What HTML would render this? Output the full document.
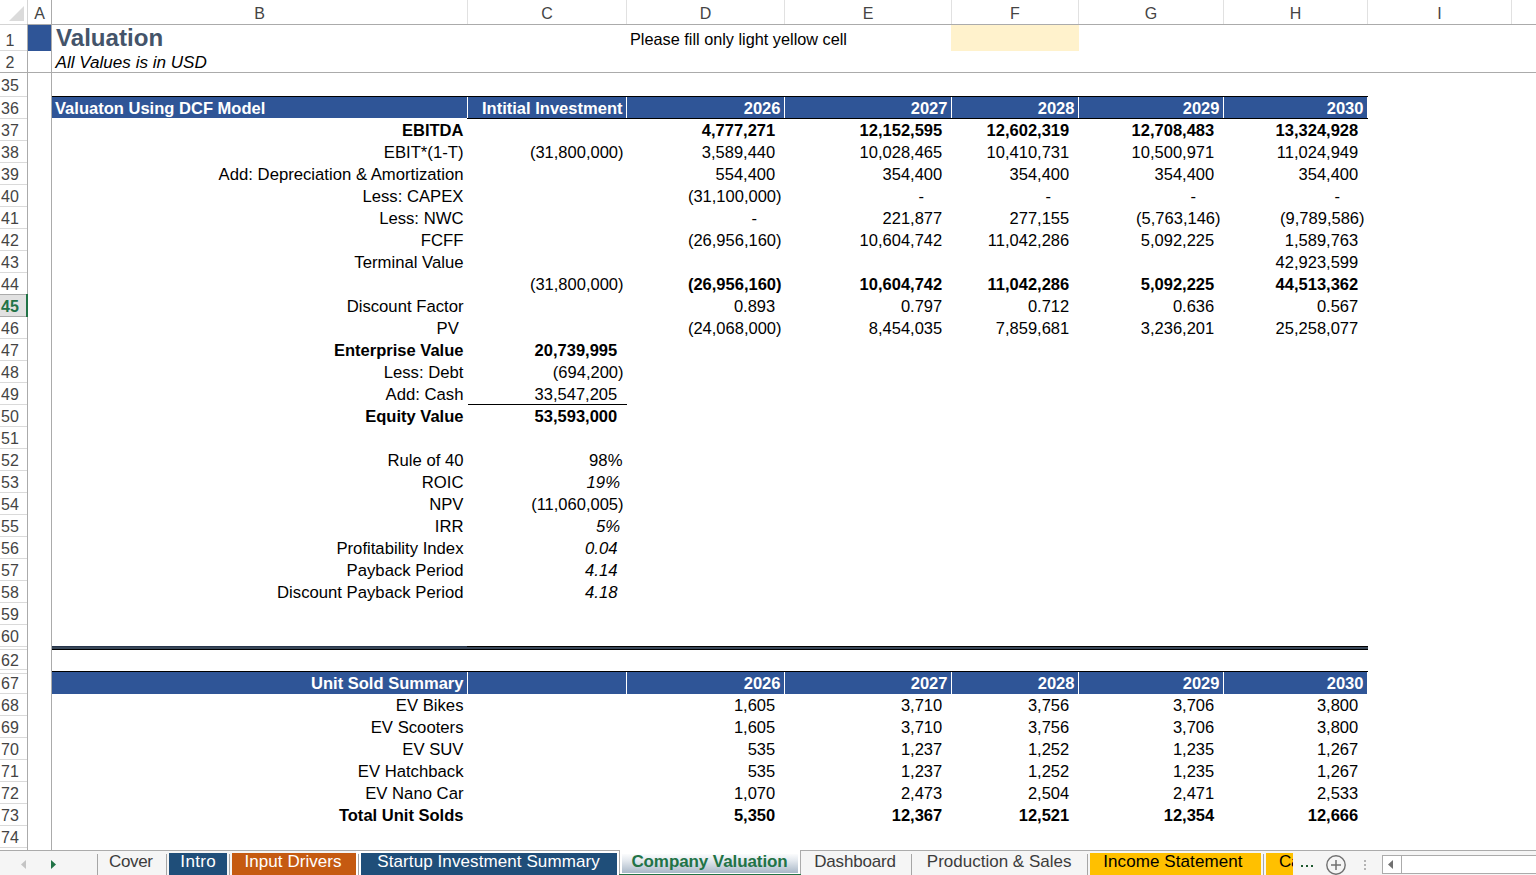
<!DOCTYPE html><html><head><meta charset="utf-8"><style>
html,body{margin:0;padding:0;}
body{width:1536px;height:875px;overflow:hidden;position:relative;background:#fff;font-family:"Liberation Sans",sans-serif;}
.a{position:absolute;}
.t{position:absolute;white-space:nowrap;font-size:16.7px;line-height:22px;height:22px;color:#000;}
.r{text-align:right;}
.b{font-weight:bold;font-size:16.55px;}
.n{font-size:16.5px;}
.i{font-style:italic;}
.w{color:#fff;}
.hd{position:absolute;font-size:16px;color:#444;text-align:center;line-height:22px;height:22px;top:2.5px;}
.rh{position:absolute;font-size:16px;color:#444;text-align:center;width:34px;left:-7px;line-height:22px;}

</style></head><body>
<div class="a" style="left:0;top:24px;width:27px;height:1px;background:#d4d4d4"></div>
<div class="a" style="left:27px;top:24px;width:1509px;height:1px;background:#ababab"></div>
<svg class="a" style="left:0;top:0" width="27" height="24"><polygon points="24,6 24,21 9,21" fill="#dbdbdb"/></svg>
<div class="a" style="left:51px;top:0;width:1px;height:24px;background:#e1e1e1"></div>
<div class="hd" style="left:28px;width:23px">A</div>
<div class="a" style="left:467px;top:0;width:1px;height:24px;background:#e1e1e1"></div>
<div class="hd" style="left:52px;width:415px">B</div>
<div class="a" style="left:626px;top:0;width:1px;height:24px;background:#e1e1e1"></div>
<div class="hd" style="left:468px;width:158px">C</div>
<div class="a" style="left:784px;top:0;width:1px;height:24px;background:#e1e1e1"></div>
<div class="hd" style="left:627px;width:157px">D</div>
<div class="a" style="left:951px;top:0;width:1px;height:24px;background:#e1e1e1"></div>
<div class="hd" style="left:785px;width:166px">E</div>
<div class="a" style="left:1078px;top:0;width:1px;height:24px;background:#e1e1e1"></div>
<div class="hd" style="left:952px;width:126px">F</div>
<div class="a" style="left:1223px;top:0;width:1px;height:24px;background:#e1e1e1"></div>
<div class="hd" style="left:1079px;width:144px">G</div>
<div class="a" style="left:1367px;top:0;width:1px;height:24px;background:#e1e1e1"></div>
<div class="hd" style="left:1224px;width:143px">H</div>
<div class="a" style="left:1511px;top:0;width:1px;height:24px;background:#e1e1e1"></div>
<div class="hd" style="left:1368px;width:143px">I</div>
<div class="a" style="left:1700px;top:0;width:1px;height:24px;background:#e1e1e1"></div>
<div class="hd" style="left:1512px;width:188px">J</div>
<div class="a" style="left:27px;top:0;width:1px;height:24px;background:#d5d5d5"></div>
<div class="a" style="left:27px;top:24px;width:1px;height:826px;background:#ababab"></div>
<div class="a" style="left:0;top:50px;width:27px;height:1px;background:#dadada"></div>
<div class="rh" style="top:29.5px;height:22px">1</div>
<div class="a" style="left:0;top:72px;width:27px;height:1px;background:#dadada"></div>
<div class="rh" style="top:51.5px;height:22px">2</div>
<div class="a" style="left:0;top:96px;width:27px;height:1px;background:#dadada"></div>
<div class="rh" style="top:74.5px;height:22px">35</div>
<div class="a" style="left:0;top:118px;width:27px;height:1px;background:#dadada"></div>
<div class="rh" style="top:97.5px;height:22px">36</div>
<div class="a" style="left:0;top:140px;width:27px;height:1px;background:#dadada"></div>
<div class="rh" style="top:119.5px;height:22px">37</div>
<div class="a" style="left:0;top:162px;width:27px;height:1px;background:#dadada"></div>
<div class="rh" style="top:141.5px;height:22px">38</div>
<div class="a" style="left:0;top:184px;width:27px;height:1px;background:#dadada"></div>
<div class="rh" style="top:163.5px;height:22px">39</div>
<div class="a" style="left:0;top:206px;width:27px;height:1px;background:#dadada"></div>
<div class="rh" style="top:185.5px;height:22px">40</div>
<div class="a" style="left:0;top:228px;width:27px;height:1px;background:#dadada"></div>
<div class="rh" style="top:207.5px;height:22px">41</div>
<div class="a" style="left:0;top:250px;width:27px;height:1px;background:#dadada"></div>
<div class="rh" style="top:229.5px;height:22px">42</div>
<div class="a" style="left:0;top:272px;width:27px;height:1px;background:#dadada"></div>
<div class="rh" style="top:251.5px;height:22px">43</div>
<div class="a" style="left:0;top:294px;width:27px;height:1px;background:#dadada"></div>
<div class="rh" style="top:273.5px;height:22px">44</div>
<div class="a" style="left:0;top:316px;width:27px;height:1px;background:#dadada"></div>
<div class="rh" style="top:295.5px;height:22px">45</div>
<div class="a" style="left:0;top:338px;width:27px;height:1px;background:#dadada"></div>
<div class="rh" style="top:317.5px;height:22px">46</div>
<div class="a" style="left:0;top:360px;width:27px;height:1px;background:#dadada"></div>
<div class="rh" style="top:339.5px;height:22px">47</div>
<div class="a" style="left:0;top:382px;width:27px;height:1px;background:#dadada"></div>
<div class="rh" style="top:361.5px;height:22px">48</div>
<div class="a" style="left:0;top:404px;width:27px;height:1px;background:#dadada"></div>
<div class="rh" style="top:383.5px;height:22px">49</div>
<div class="a" style="left:0;top:426px;width:27px;height:1px;background:#dadada"></div>
<div class="rh" style="top:405.5px;height:22px">50</div>
<div class="a" style="left:0;top:448px;width:27px;height:1px;background:#dadada"></div>
<div class="rh" style="top:427.5px;height:22px">51</div>
<div class="a" style="left:0;top:470px;width:27px;height:1px;background:#dadada"></div>
<div class="rh" style="top:449.5px;height:22px">52</div>
<div class="a" style="left:0;top:492px;width:27px;height:1px;background:#dadada"></div>
<div class="rh" style="top:471.5px;height:22px">53</div>
<div class="a" style="left:0;top:514px;width:27px;height:1px;background:#dadada"></div>
<div class="rh" style="top:493.5px;height:22px">54</div>
<div class="a" style="left:0;top:536px;width:27px;height:1px;background:#dadada"></div>
<div class="rh" style="top:515.5px;height:22px">55</div>
<div class="a" style="left:0;top:558px;width:27px;height:1px;background:#dadada"></div>
<div class="rh" style="top:537.5px;height:22px">56</div>
<div class="a" style="left:0;top:580px;width:27px;height:1px;background:#dadada"></div>
<div class="rh" style="top:559.5px;height:22px">57</div>
<div class="a" style="left:0;top:602px;width:27px;height:1px;background:#dadada"></div>
<div class="rh" style="top:581.5px;height:22px">58</div>
<div class="a" style="left:0;top:624px;width:27px;height:1px;background:#dadada"></div>
<div class="rh" style="top:603.5px;height:22px">59</div>
<div class="a" style="left:0;top:646px;width:27px;height:1px;background:#dadada"></div>
<div class="rh" style="top:625.5px;height:22px">60</div>
<div class="a" style="left:0;top:669px;width:27px;height:1px;background:#dadada"></div>
<div class="rh" style="top:650.0px;height:22px">62</div>
<div class="a" style="left:0;top:693px;width:27px;height:1px;background:#dadada"></div>
<div class="rh" style="top:672.5px;height:22px">67</div>
<div class="a" style="left:0;top:715px;width:27px;height:1px;background:#dadada"></div>
<div class="rh" style="top:694.5px;height:22px">68</div>
<div class="a" style="left:0;top:737px;width:27px;height:1px;background:#dadada"></div>
<div class="rh" style="top:716.5px;height:22px">69</div>
<div class="a" style="left:0;top:759px;width:27px;height:1px;background:#dadada"></div>
<div class="rh" style="top:738.5px;height:22px">70</div>
<div class="a" style="left:0;top:781px;width:27px;height:1px;background:#dadada"></div>
<div class="rh" style="top:760.5px;height:22px">71</div>
<div class="a" style="left:0;top:803px;width:27px;height:1px;background:#dadada"></div>
<div class="rh" style="top:782.5px;height:22px">72</div>
<div class="a" style="left:0;top:825px;width:27px;height:1px;background:#dadada"></div>
<div class="rh" style="top:804.5px;height:22px">73</div>
<div class="a" style="left:0;top:847px;width:27px;height:1px;background:#dadada"></div>
<div class="rh" style="top:826.5px;height:22px">74</div>
<div class="a" style="left:0;top:649px;width:27px;height:1px;background:#dadada"></div>
<div class="a" style="left:0;top:673px;width:27px;height:1px;background:#dadada"></div>
<div class="a" style="left:28px;top:25px;width:24px;height:26px;background:#2f5597;"></div>
<div class="a" style="left:951px;top:25px;width:128px;height:26px;background:#fff2cc"></div>
<div class="t b" style="left:56px;top:22.8px;font-size:24.1px;line-height:30px;height:30px;color:#44546a">Valuation</div>
<div class="t i" style="left:55.5px;top:52px;font-size:17.1px">All Values is in USD</div>
<div class="t" style="left:630px;top:28px;font-size:16.27px">Please fill only light yellow cell</div>
<div class="a" style="left:52px;top:96px;width:1316px;height:1px;background:#000"></div>
<div class="a" style="left:52px;top:97px;width:1315px;height:21px;background:#2f5597"></div>
<div class="a" style="left:467px;top:118px;width:901px;height:1px;background:#000"></div>
<div class="a" style="left:467px;top:97px;width:1px;height:21px;background:#fff"></div>
<div class="a" style="left:626px;top:97px;width:1px;height:21px;background:#fff"></div>
<div class="a" style="left:784px;top:97px;width:1px;height:21px;background:#fff"></div>
<div class="a" style="left:951px;top:97px;width:1px;height:21px;background:#fff"></div>
<div class="a" style="left:1078px;top:97px;width:1px;height:21px;background:#fff"></div>
<div class="a" style="left:1223px;top:97px;width:1px;height:21px;background:#fff"></div>
<div class="t b w" style="left:55px;top:97.5px">Valuaton Using DCF Model</div>
<div class="t r b w" style="left:468px;width:154.5px;top:97.5px">Intitial Investment</div>
<div class="t r b w" style="left:627px;width:153.5px;top:97.5px">2026</div>
<div class="t r b w" style="left:785px;width:162.5px;top:97.5px">2027</div>
<div class="t r b w" style="left:952px;width:122.5px;top:97.5px">2028</div>
<div class="t r b w" style="left:1079px;width:140.5px;top:97.5px">2029</div>
<div class="t r b w" style="left:1224px;width:139.5px;top:97.5px">2030</div>
<div class="t r b" style="left:52px;width:411.5px;top:119.5px">EBITDA</div>
<div class="t r b n" style="left:627px;width:154.5px;top:118.5px">4,777,271<span style="display:inline-block;width:6.3px"></span></div>
<div class="t r b n" style="left:785px;width:163.5px;top:118.5px">12,152,595<span style="display:inline-block;width:6.3px"></span></div>
<div class="t r b n" style="left:952px;width:123.5px;top:118.5px">12,602,319<span style="display:inline-block;width:6.3px"></span></div>
<div class="t r b n" style="left:1079px;width:141.5px;top:118.5px">12,708,483<span style="display:inline-block;width:6.3px"></span></div>
<div class="t r b n" style="left:1224px;width:140.5px;top:118.5px">13,324,928<span style="display:inline-block;width:6.3px"></span></div>
<div class="t r " style="left:52px;width:411.5px;top:141.5px">EBIT*(1-T)</div>
<div class="t r  n" style="left:468px;width:155.5px;top:140.5px">(31,800,000)</div>
<div class="t r  n" style="left:627px;width:154.5px;top:140.5px">3,589,440<span style="display:inline-block;width:6.3px"></span></div>
<div class="t r  n" style="left:785px;width:163.5px;top:140.5px">10,028,465<span style="display:inline-block;width:6.3px"></span></div>
<div class="t r  n" style="left:952px;width:123.5px;top:140.5px">10,410,731<span style="display:inline-block;width:6.3px"></span></div>
<div class="t r  n" style="left:1079px;width:141.5px;top:140.5px">10,500,971<span style="display:inline-block;width:6.3px"></span></div>
<div class="t r  n" style="left:1224px;width:140.5px;top:140.5px">11,024,949<span style="display:inline-block;width:6.3px"></span></div>
<div class="t r " style="left:52px;width:411.5px;top:163.5px">Add: Depreciation &amp; Amortization</div>
<div class="t r  n" style="left:627px;width:154.5px;top:162.5px">554,400<span style="display:inline-block;width:6.3px"></span></div>
<div class="t r  n" style="left:785px;width:163.5px;top:162.5px">354,400<span style="display:inline-block;width:6.3px"></span></div>
<div class="t r  n" style="left:952px;width:123.5px;top:162.5px">354,400<span style="display:inline-block;width:6.3px"></span></div>
<div class="t r  n" style="left:1079px;width:141.5px;top:162.5px">354,400<span style="display:inline-block;width:6.3px"></span></div>
<div class="t r  n" style="left:1224px;width:140.5px;top:162.5px">354,400<span style="display:inline-block;width:6.3px"></span></div>
<div class="t r " style="left:52px;width:411.5px;top:185.5px">Less: CAPEX</div>
<div class="t r  n" style="left:627px;width:154.5px;top:184.5px">(31,100,000)</div>
<div class="t r  n" style="left:785px;width:163.5px;top:184.5px">-<span style="display:inline-block;width:24.5px"></span></div>
<div class="t r  n" style="left:952px;width:123.5px;top:184.5px">-<span style="display:inline-block;width:24.5px"></span></div>
<div class="t r  n" style="left:1079px;width:141.5px;top:184.5px">-<span style="display:inline-block;width:24.5px"></span></div>
<div class="t r  n" style="left:1224px;width:140.5px;top:184.5px">-<span style="display:inline-block;width:24.5px"></span></div>
<div class="t r " style="left:52px;width:411.5px;top:207.5px">Less: NWC</div>
<div class="t r  n" style="left:627px;width:154.5px;top:206.5px">-<span style="display:inline-block;width:24.5px"></span></div>
<div class="t r  n" style="left:785px;width:163.5px;top:206.5px">221,877<span style="display:inline-block;width:6.3px"></span></div>
<div class="t r  n" style="left:952px;width:123.5px;top:206.5px">277,155<span style="display:inline-block;width:6.3px"></span></div>
<div class="t r  n" style="left:1079px;width:141.5px;top:206.5px">(5,763,146)</div>
<div class="t r  n" style="left:1224px;width:140.5px;top:206.5px">(9,789,586)</div>
<div class="t r " style="left:52px;width:411.5px;top:229.5px">FCFF</div>
<div class="t r  n" style="left:627px;width:154.5px;top:228.5px">(26,956,160)</div>
<div class="t r  n" style="left:785px;width:163.5px;top:228.5px">10,604,742<span style="display:inline-block;width:6.3px"></span></div>
<div class="t r  n" style="left:952px;width:123.5px;top:228.5px">11,042,286<span style="display:inline-block;width:6.3px"></span></div>
<div class="t r  n" style="left:1079px;width:141.5px;top:228.5px">5,092,225<span style="display:inline-block;width:6.3px"></span></div>
<div class="t r  n" style="left:1224px;width:140.5px;top:228.5px">1,589,763<span style="display:inline-block;width:6.3px"></span></div>
<div class="t r " style="left:52px;width:411.5px;top:251.5px">Terminal Value</div>
<div class="t r  n" style="left:1224px;width:140.5px;top:250.5px">42,923,599<span style="display:inline-block;width:6.3px"></span></div>
<div class="t r  n" style="left:468px;width:155.5px;top:272.5px">(31,800,000)</div>
<div class="t r b n" style="left:627px;width:154.5px;top:272.5px">(26,956,160)</div>
<div class="t r b n" style="left:785px;width:163.5px;top:272.5px">10,604,742<span style="display:inline-block;width:6.3px"></span></div>
<div class="t r b n" style="left:952px;width:123.5px;top:272.5px">11,042,286<span style="display:inline-block;width:6.3px"></span></div>
<div class="t r b n" style="left:1079px;width:141.5px;top:272.5px">5,092,225<span style="display:inline-block;width:6.3px"></span></div>
<div class="t r b n" style="left:1224px;width:140.5px;top:272.5px">44,513,362<span style="display:inline-block;width:6.3px"></span></div>
<div class="t r " style="left:52px;width:411.5px;top:295.5px">Discount Factor</div>
<div class="t r  n" style="left:627px;width:154.5px;top:294.5px">0.893<span style="display:inline-block;width:6.3px"></span></div>
<div class="t r  n" style="left:785px;width:163.5px;top:294.5px">0.797<span style="display:inline-block;width:6.3px"></span></div>
<div class="t r  n" style="left:952px;width:123.5px;top:294.5px">0.712<span style="display:inline-block;width:6.3px"></span></div>
<div class="t r  n" style="left:1079px;width:141.5px;top:294.5px">0.636<span style="display:inline-block;width:6.3px"></span></div>
<div class="t r  n" style="left:1224px;width:140.5px;top:294.5px">0.567<span style="display:inline-block;width:6.3px"></span></div>
<div class="t r " style="left:52px;width:411.5px;top:317.5px">PV&nbsp;</div>
<div class="t r  n" style="left:627px;width:154.5px;top:316.5px">(24,068,000)</div>
<div class="t r  n" style="left:785px;width:163.5px;top:316.5px">8,454,035<span style="display:inline-block;width:6.3px"></span></div>
<div class="t r  n" style="left:952px;width:123.5px;top:316.5px">7,859,681<span style="display:inline-block;width:6.3px"></span></div>
<div class="t r  n" style="left:1079px;width:141.5px;top:316.5px">3,236,201<span style="display:inline-block;width:6.3px"></span></div>
<div class="t r  n" style="left:1224px;width:140.5px;top:316.5px">25,258,077<span style="display:inline-block;width:6.3px"></span></div>
<div class="t r b" style="left:52px;width:411.5px;top:339.5px">Enterprise Value</div>
<div class="t r b n" style="left:468px;width:155.5px;top:338.5px">20,739,995<span style="display:inline-block;width:6.3px"></span></div>
<div class="t r " style="left:52px;width:411.5px;top:361.5px">Less: Debt</div>
<div class="t r  n" style="left:468px;width:155.5px;top:360.5px">(694,200)</div>
<div class="t r " style="left:52px;width:411.5px;top:383.5px">Add: Cash</div>
<div class="t r  n" style="left:468px;width:155.5px;top:382.5px">33,547,205<span style="display:inline-block;width:6.3px"></span></div>
<div class="a" style="left:468px;top:404px;width:159px;height:1px;background:#000"></div>
<div class="t r b" style="left:52px;width:411.5px;top:405.5px">Equity Value</div>
<div class="t r b n" style="left:468px;width:155.5px;top:404.5px">53,593,000<span style="display:inline-block;width:6.3px"></span></div>
<div class="t r " style="left:52px;width:411.5px;top:449.5px">Rule of 40</div>
<div class="t r " style="left:468px;width:154.5px;top:449.5px">98%</div>
<div class="t r " style="left:52px;width:411.5px;top:471.5px">ROIC</div>
<div class="t r i" style="left:468px;width:152px;top:471.5px">19%</div>
<div class="t r " style="left:52px;width:411.5px;top:493.5px">NPV</div>
<div class="t r  n" style="left:468px;width:155.5px;top:492.5px">(11,060,005)</div>
<div class="t r " style="left:52px;width:411.5px;top:515.5px">IRR</div>
<div class="t r i" style="left:468px;width:152px;top:515.5px">5%</div>
<div class="t r " style="left:52px;width:411.5px;top:537.5px">Profitability Index</div>
<div class="t r i" style="left:468px;width:149.5px;top:537.5px">0.04</div>
<div class="t r " style="left:52px;width:411.5px;top:559.5px">Payback Period</div>
<div class="t r i" style="left:468px;width:149.5px;top:559.5px">4.14</div>
<div class="t r " style="left:52px;width:411.5px;top:581.5px">Discount Payback Period</div>
<div class="t r i" style="left:468px;width:149.5px;top:581.5px">4.18</div>
<div class="a" style="left:52px;top:646px;width:415px;height:1px;background:#27354b"></div>
<div class="a" style="left:467px;top:646px;width:901px;height:1px;background:#000"></div>
<div class="a" style="left:52px;top:647px;width:1316px;height:2px;background:#394859"></div>
<div class="a" style="left:52px;top:649px;width:1316px;height:1px;background:#000"></div>
<div class="a" style="left:52px;top:671px;width:1316px;height:1px;background:#000"></div>
<div class="a" style="left:52px;top:672px;width:1315px;height:22px;background:#2f5597"></div>
<div class="a" style="left:467px;top:672px;width:1px;height:22px;background:#fff"></div>
<div class="a" style="left:626px;top:672px;width:1px;height:22px;background:#fff"></div>
<div class="a" style="left:784px;top:672px;width:1px;height:22px;background:#fff"></div>
<div class="a" style="left:951px;top:672px;width:1px;height:22px;background:#fff"></div>
<div class="a" style="left:1078px;top:672px;width:1px;height:22px;background:#fff"></div>
<div class="a" style="left:1223px;top:672px;width:1px;height:22px;background:#fff"></div>
<div class="t r b w" style="left:52px;width:411.5px;top:672.5px">Unit Sold Summary</div>
<div class="t r b w" style="left:627px;width:153.5px;top:672.5px">2026</div>
<div class="t r b w" style="left:785px;width:162.5px;top:672.5px">2027</div>
<div class="t r b w" style="left:952px;width:122.5px;top:672.5px">2028</div>
<div class="t r b w" style="left:1079px;width:140.5px;top:672.5px">2029</div>
<div class="t r b w" style="left:1224px;width:139.5px;top:672.5px">2030</div>
<div class="t r " style="left:52px;width:411.5px;top:694.5px">EV Bikes</div>
<div class="t r  n" style="left:627px;width:154.5px;top:693.5px">1,605<span style="display:inline-block;width:6.3px"></span></div>
<div class="t r  n" style="left:785px;width:163.5px;top:693.5px">3,710<span style="display:inline-block;width:6.3px"></span></div>
<div class="t r  n" style="left:952px;width:123.5px;top:693.5px">3,756<span style="display:inline-block;width:6.3px"></span></div>
<div class="t r  n" style="left:1079px;width:141.5px;top:693.5px">3,706<span style="display:inline-block;width:6.3px"></span></div>
<div class="t r  n" style="left:1224px;width:140.5px;top:693.5px">3,800<span style="display:inline-block;width:6.3px"></span></div>
<div class="t r " style="left:52px;width:411.5px;top:716.5px">EV Scooters</div>
<div class="t r  n" style="left:627px;width:154.5px;top:715.5px">1,605<span style="display:inline-block;width:6.3px"></span></div>
<div class="t r  n" style="left:785px;width:163.5px;top:715.5px">3,710<span style="display:inline-block;width:6.3px"></span></div>
<div class="t r  n" style="left:952px;width:123.5px;top:715.5px">3,756<span style="display:inline-block;width:6.3px"></span></div>
<div class="t r  n" style="left:1079px;width:141.5px;top:715.5px">3,706<span style="display:inline-block;width:6.3px"></span></div>
<div class="t r  n" style="left:1224px;width:140.5px;top:715.5px">3,800<span style="display:inline-block;width:6.3px"></span></div>
<div class="t r " style="left:52px;width:411.5px;top:738.5px">EV SUV</div>
<div class="t r  n" style="left:627px;width:154.5px;top:737.5px">535<span style="display:inline-block;width:6.3px"></span></div>
<div class="t r  n" style="left:785px;width:163.5px;top:737.5px">1,237<span style="display:inline-block;width:6.3px"></span></div>
<div class="t r  n" style="left:952px;width:123.5px;top:737.5px">1,252<span style="display:inline-block;width:6.3px"></span></div>
<div class="t r  n" style="left:1079px;width:141.5px;top:737.5px">1,235<span style="display:inline-block;width:6.3px"></span></div>
<div class="t r  n" style="left:1224px;width:140.5px;top:737.5px">1,267<span style="display:inline-block;width:6.3px"></span></div>
<div class="t r " style="left:52px;width:411.5px;top:760.5px">EV Hatchback</div>
<div class="t r  n" style="left:627px;width:154.5px;top:759.5px">535<span style="display:inline-block;width:6.3px"></span></div>
<div class="t r  n" style="left:785px;width:163.5px;top:759.5px">1,237<span style="display:inline-block;width:6.3px"></span></div>
<div class="t r  n" style="left:952px;width:123.5px;top:759.5px">1,252<span style="display:inline-block;width:6.3px"></span></div>
<div class="t r  n" style="left:1079px;width:141.5px;top:759.5px">1,235<span style="display:inline-block;width:6.3px"></span></div>
<div class="t r  n" style="left:1224px;width:140.5px;top:759.5px">1,267<span style="display:inline-block;width:6.3px"></span></div>
<div class="t r " style="left:52px;width:411.5px;top:782.5px">EV Nano Car</div>
<div class="t r  n" style="left:627px;width:154.5px;top:781.5px">1,070<span style="display:inline-block;width:6.3px"></span></div>
<div class="t r  n" style="left:785px;width:163.5px;top:781.5px">2,473<span style="display:inline-block;width:6.3px"></span></div>
<div class="t r  n" style="left:952px;width:123.5px;top:781.5px">2,504<span style="display:inline-block;width:6.3px"></span></div>
<div class="t r  n" style="left:1079px;width:141.5px;top:781.5px">2,471<span style="display:inline-block;width:6.3px"></span></div>
<div class="t r  n" style="left:1224px;width:140.5px;top:781.5px">2,533<span style="display:inline-block;width:6.3px"></span></div>
<div class="t r b" style="left:52px;width:411.5px;top:804.5px">Total Unit Solds</div>
<div class="t r b n" style="left:627px;width:154.5px;top:803.5px">5,350<span style="display:inline-block;width:6.3px"></span></div>
<div class="t r b n" style="left:785px;width:163.5px;top:803.5px">12,367<span style="display:inline-block;width:6.3px"></span></div>
<div class="t r b n" style="left:952px;width:123.5px;top:803.5px">12,521<span style="display:inline-block;width:6.3px"></span></div>
<div class="t r b n" style="left:1079px;width:141.5px;top:803.5px">12,354<span style="display:inline-block;width:6.3px"></span></div>
<div class="t r b n" style="left:1224px;width:140.5px;top:803.5px">12,666<span style="display:inline-block;width:6.3px"></span></div>
<div class="a" style="left:51px;top:0px;width:1px;height:850px;background:#ababab"></div>
<div class="a" style="left:0px;top:72px;width:1536px;height:1px;background:#ababab"></div>
<div class="a" style="left:0;top:294px;width:27px;height:23px;background:#e1e1e1;border-top:0"></div>
<div class="a" style="left:0px;top:294px;width:27px;height:1px;background:#ababab"></div>
<div class="a" style="left:0px;top:316px;width:27px;height:1px;background:#ababab"></div>
<div class="a" style="left:26px;top:294px;width:2px;height:23px;background:#217346"></div>
<div class="rh" style="top:295.5px;height:22px;color:#217346;font-weight:bold">45</div>
<div class="a" style="left:0;top:851px;width:1536px;height:24px;background:#f5f5f5"></div>
<div class="a" style="left:0px;top:850px;width:619px;height:1px;background:#ababab"></div>
<div class="a" style="left:800px;top:850px;width:736px;height:1px;background:#ababab"></div>
<svg class="a" style="left:0;top:851px" width="97" height="24"><polygon points="26,9 26,18 21,13.5" fill="#c4c4c4"/><polygon points="51,9 51,18 56,13.5" fill="#217346"/></svg>
<div class="a" style="left:97px;top:854px;width:1px;height:21px;background:#a6a6a6"></div>
<div class="a" style="left:166px;top:854px;width:1px;height:21px;background:#a6a6a6"></div>
<div class="a" style="left:229px;top:854px;width:1px;height:21px;background:#a6a6a6"></div>
<div class="a" style="left:358px;top:854px;width:1px;height:21px;background:#a6a6a6"></div>
<div class="a" style="left:911px;top:854px;width:1px;height:21px;background:#a6a6a6"></div>
<div class="a" style="left:1087px;top:854px;width:1px;height:21px;background:#a6a6a6"></div>
<div class="a" style="left:1263px;top:854px;width:1px;height:21px;background:#a6a6a6"></div>
<div class="a" style="left:109.10px;top:851px;height:22px;font-size:17px;line-height:22px;letter-spacing:-0.389px;color:#3c3c3c;white-space:nowrap;">Cover</div>
<div class="a" style="left:169px;top:853px;width:58px;height:22px;background:#1f4e79"></div>
<div class="a" style="left:180.30px;top:851px;height:22px;font-size:17px;line-height:22px;letter-spacing:0.371px;color:#fff;white-space:nowrap;">Intro</div>
<div class="a" style="left:232px;top:853px;width:124px;height:22px;background:#c55a11"></div>
<div class="a" style="left:244.60px;top:851px;height:22px;font-size:17px;line-height:22px;letter-spacing:0.045px;color:#fff;white-space:nowrap;">Input Drivers</div>
<div class="a" style="left:356px;top:851px;width:263px;height:2px;background:#fff"></div>
<div class="a" style="left:356px;top:851px;width:2px;height:24px;background:#fff"></div>
<div class="a" style="left:359px;top:851px;width:2px;height:24px;background:#fff"></div>
<div class="a" style="left:617px;top:851px;width:2px;height:24px;background:#fff"></div>
<div class="a" style="left:361px;top:853px;width:256px;height:22px;background:#1f4e79"></div>
<div class="a" style="left:377.30px;top:851px;height:22px;font-size:17px;line-height:22px;letter-spacing:0.091px;color:#fff;white-space:nowrap;">Startup Investment Summary</div>
<div class="a" style="left:619px;top:850px;width:182px;height:25px;background:#fff"></div>
<div class="a" style="left:619px;top:850px;width:1px;height:25px;background:#ababab"></div>
<div class="a" style="left:800px;top:850px;width:1px;height:25px;background:#ababab"></div>
<div class="a" style="left:622px;top:854px;width:176px;height:19px;background:linear-gradient(#fbfcfd,#e3e8ee 35%,#a9b8c8)"></div>
<div class="a" style="left:619px;top:874px;width:182px;height:1px;background:#217346"></div>
<div class="a" style="left:631.40px;top:851px;height:22px;font-size:17px;line-height:22px;letter-spacing:-0.090px;color:#217346;white-space:nowrap;font-weight:bold;">Company Valuation</div>
<div class="a" style="left:814.20px;top:851px;height:22px;font-size:17px;line-height:22px;letter-spacing:-0.171px;color:#3c3c3c;white-space:nowrap;">Dashboard</div>
<div class="a" style="left:926.80px;top:851px;height:22px;font-size:17px;line-height:22px;letter-spacing:0.007px;color:#3c3c3c;white-space:nowrap;">Production &amp; Sales</div>
<div class="a" style="left:1090px;top:853px;width:171px;height:22px;background:#ffc000"></div>
<div class="a" style="left:1103.20px;top:851px;height:22px;font-size:17px;line-height:22px;letter-spacing:0.090px;color:#000;white-space:nowrap;">Income Statement</div>
<div class="a" style="left:1266px;top:853px;width:27px;height:22px;background:#ffc000"></div>
<div class="a" style="left:1266px;top:851px;width:27px;height:24px;overflow:hidden"><div style="position:absolute;left:13px;top:0;font-size:17px;line-height:22px;letter-spacing:-0.3px;color:#000;white-space:nowrap">Cash</div></div>
<div class="a" style="left:1301px;top:865px;width:2px;height:2px;background:#1e5a30"></div>
<div class="a" style="left:1306px;top:865px;width:2px;height:2px;background:#1e5a30"></div>
<div class="a" style="left:1311px;top:865px;width:2px;height:2px;background:#1e5a30"></div>
<svg class="a" style="left:1320px;top:851px" width="32" height="24"><circle cx="16" cy="14" r="9.2" fill="none" stroke="#707070" stroke-width="1.4"/><rect x="11" y="13.25" width="10" height="1.5" fill="#707070"/><rect x="15.25" y="9" width="1.5" height="10" fill="#707070"/></svg>
<div class="a" style="left:1364px;top:860px;width:2px;height:2px;background:#b4b4b4"></div>
<div class="a" style="left:1364px;top:864px;width:2px;height:2px;background:#b4b4b4"></div>
<div class="a" style="left:1364px;top:868px;width:2px;height:2px;background:#b4b4b4"></div>
<div class="a" style="left:1382px;top:855px;width:160px;height:17px;border:1px solid #ababab;background:#fff;box-sizing:content-box"></div>
<div class="a" style="left:1401px;top:855px;width:1px;height:19px;background:#ababab"></div>
<svg class="a" style="left:1382px;top:855px" width="19" height="19"><polygon points="6,9.5 11,5 11,14" fill="#707070"/></svg>
</body></html>
